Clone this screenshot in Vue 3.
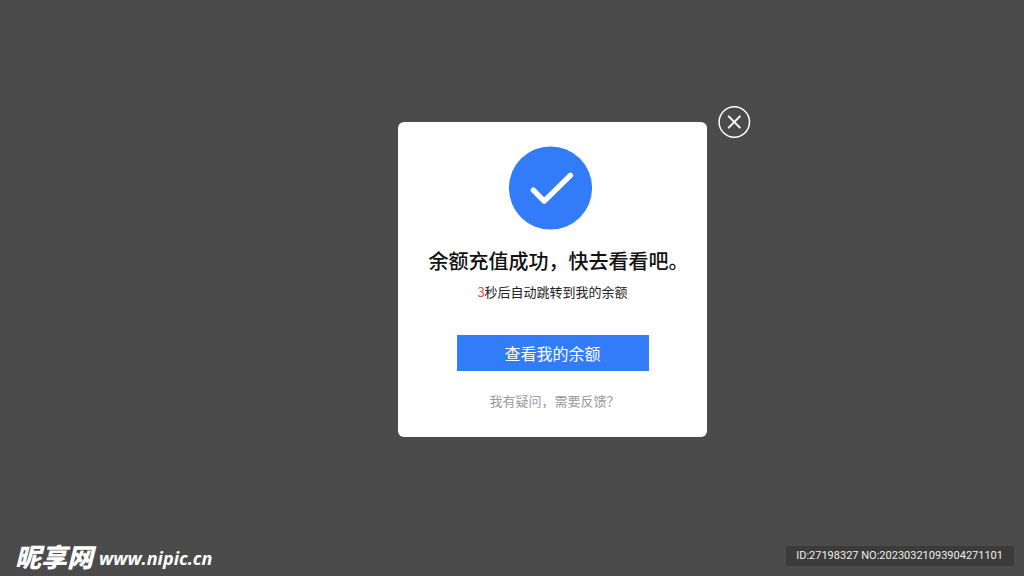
<script setup>
import { ref } from 'vue'

const open = ref(true)
const seconds = ref(3)
</script>

<template>
  <div class="page">
    <main class="stage">
      <section v-if="open" class="dialog" role="dialog" aria-labelledby="dialog-title">
        <button class="close" type="button" aria-label="关闭" @click="open = false">
          <svg viewBox="0 0 32 32" aria-hidden="true">
            <circle cx="16.3" cy="16" r="15.2" />
            <path d="M10.7 10.4 21.9 21.6M21.9 10.4 10.7 21.6" />
          </svg>
        </button>
        <svg class="success" viewBox="0 0 84 84" aria-hidden="true">
          <circle cx="41.5" cy="42" r="41.6" />
          <path d="M24.3 44.2 35.2 55.2 61.4 29.4" />
        </svg>
        <h1 id="dialog-title" class="title">余额充值成功，快去看看吧。</h1>
        <p class="countdown"><span class="seconds">{{ seconds }}</span>秒后自动跳转到我的余额</p>
        <button class="primary" type="button">查看我的余额</button>
        <a class="feedback" href="#">我有疑问，需要反馈？</a>
      </section>
    </main>
    <footer class="footer">
      <div class="brand">
        <span class="brand-name">昵享网</span>
        <span class="brand-url">www.nipic.cn</span>
      </div>
      <div class="serial">ID:27198327 NO:20230321093904271101</div>
    </footer>
  </div>
</template>

<style>
body {
  background: #4b4b4b;
}
</style>

<style scoped>
.page {
  display: flex;
  flex-direction: column;
  box-sizing: border-box;
  min-height: 100vh;
  background: #4b4b4b;
  font-family: "Noto Sans CJK SC", sans-serif;
}

.stage {
  display: flex;
  flex: 1;
  align-items: center;
  justify-content: center;
  padding: 14px 0 0 81px;
}

.dialog {
  position: relative;
  display: flex;
  flex-direction: column;
  align-items: center;
  box-sizing: border-box;
  width: 309px;
  padding: 24px 0 26px;
  border-radius: 6px;
  background: #fff;
}

.close {
  position: absolute;
  top: -16px;
  right: -43px;
  width: 32px;
  height: 32px;
  padding: 0;
  border: 0;
  background: none;
  cursor: pointer;
}

.close svg {
  display: block;
  overflow: visible;
  width: 100%;
  height: 100%;
  fill: none;
  stroke: #fff;
  stroke-width: 1.5;
  stroke-linecap: round;
}

.close path {
  stroke-width: 2;
}

.success {
  overflow: visible;
  width: 84px;
  height: 84px;
  margin-right: 4px;
}

.success circle {
  fill: #327cf9;
}

.success path {
  fill: none;
  stroke: #fff;
  stroke-width: 5.4;
  stroke-linecap: round;
  stroke-linejoin: round;
}

.title {
  margin: 16px 0 0;
  padding-left: 12px;
  color: #111;
  font-size: 20px;
  font-weight: 500;
  line-height: 30px;
  white-space: nowrap;
}

.countdown {
  margin: 6px 0 0;
  color: #222;
  font-size: 13px;
  line-height: 20px;
}

.seconds {
  color: #f04848;
}

.primary {
  width: 192px;
  height: 36px;
  margin-top: 33px;
  padding: 0;
  border: 0;
  background: #327cf9;
  color: #fff;
  font-family: inherit;
  font-size: 16px;
  font-weight: 400;
  line-height: 36px;
  cursor: pointer;
}

.feedback {
  margin-top: 20px;
  padding-left: 4px;
  color: #999;
  font-size: 13px;
  line-height: 20px;
  text-decoration: none;
}

.footer {
  display: flex;
  align-items: center;
  justify-content: space-between;
  padding: 0 10px 8px 15px;
  color: #fff;
}

.brand {
  display: flex;
  align-items: center;
  gap: 6px;
  font-style: italic;
}

.brand-name {
  font-size: 26px;
  font-weight: 900;
  line-height: 24px;
}

.brand-url {
  padding-top: 4px;
  font-family: "Open Sans", sans-serif;
  font-size: 18px;
  font-weight: 700;
  line-height: 20px;
}

.serial {
  padding: 0 11px 0 10px;
  background: #3b3b3b;
  color: #eee;
  font-family: Roboto, sans-serif;
  font-size: 11px;
  line-height: 20px;
}
</style>
